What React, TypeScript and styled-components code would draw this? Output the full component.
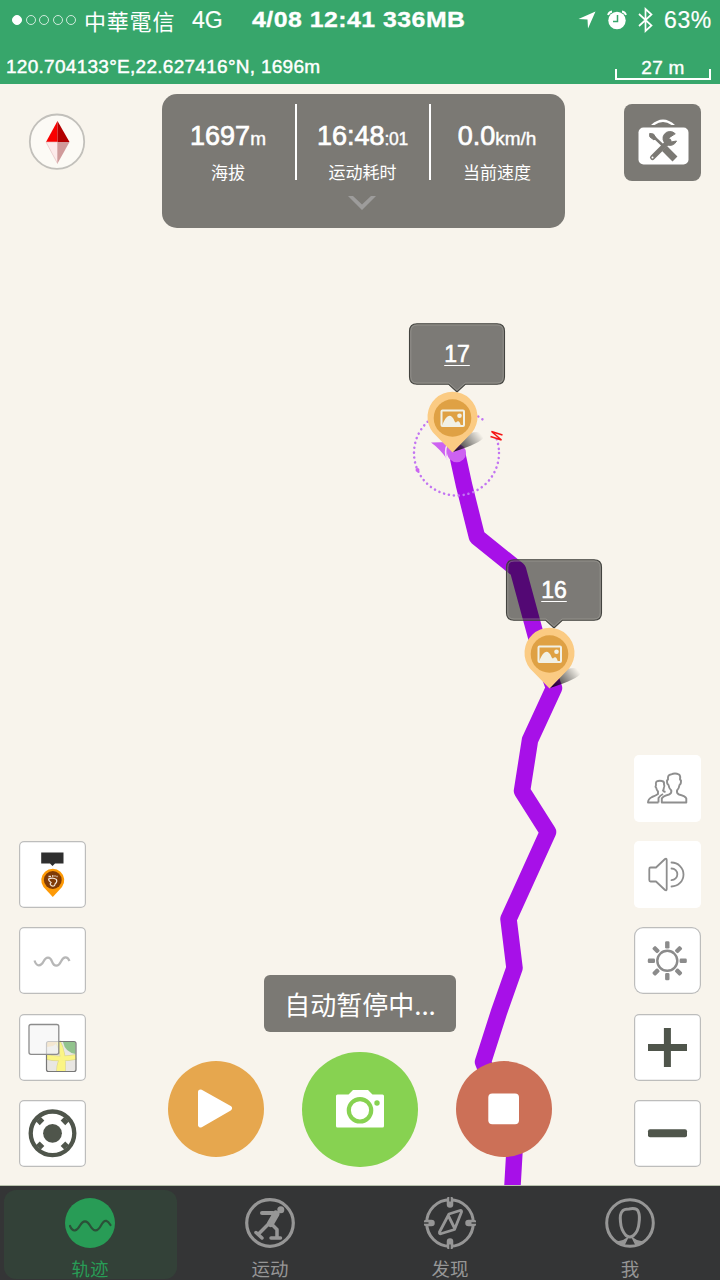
import React from "react";
import styled, { createGlobalStyle } from "styled-components";

const GlobalStyle = createGlobalStyle`
  * { box-sizing: border-box; }
  body {
    margin: 0;
    background: #f8f4ec;
    font-family: "Liberation Sans", "Noto Sans CJK SC", sans-serif;
  }
  button { border: 0; padding: 0; font: inherit; }
  svg { display: block; }
`;

const Screen = styled.div`
  width: 720px;
  height: 1280px;
  display: grid;
  grid-template-rows: 84px 1102px 94px;
  overflow: hidden;
`;

/* ---------- header ---------- */

const Header = styled.header`
  background: #37a66b;
  color: #fff;
  display: grid;
  grid-template-rows: 40px 44px;
`;

const StatusRow = styled.div`
  display: flex;
  align-items: center;
  padding: 0 8px 0 12px;
`;

const SignalDots = styled.div`
  display: flex;
  gap: 3.5px;
  width: 72px;
`;

const SignalDot = styled.i<{ $on?: boolean }>`
  width: 10px;
  height: 10px;
  border-radius: 50%;
  border: 1px solid ${(p) => (p.$on ? "#fff" : "rgba(255,255,255,.75)")};
  background: ${(p) => (p.$on ? "#fff" : "transparent")};
`;

const Carrier = styled.span`
  font: 22px/40px "Noto Sans CJK TC", sans-serif;
  letter-spacing: 0.8px;
  width: 108px;
`;

const Network = styled.span`
  font-size: 23px;
  line-height: 40px;
  width: 60px;
  -webkit-text-stroke: 0.2px #fff;
`;

const Clock = styled.span`
  font-size: 22px;
  font-weight: 700;
  line-height: 40px;
  white-space: nowrap;
  transform: scaleX(1.13);
  transform-origin: left center;
  letter-spacing: 0.42px;
  -webkit-text-stroke: 0.3px #fff;
`;

const StatusIcons = styled.div`
  display: flex;
  align-items: center;
  gap: 11px;
  margin-left: auto;
`;

const Battery = styled.span`
  font-size: 23px;
  line-height: 40px;
  letter-spacing: 0.6px;
  width: 48px;
  -webkit-text-stroke: 0.2px #fff;
`;

const InfoRow = styled.div`
  display: flex;
  justify-content: space-between;
  padding: 0 9px 0 6px;
`;

const Coordinates = styled.span`
  font-size: 19px;
  line-height: 53px;
  letter-spacing: 0.28px;
  -webkit-text-stroke: 0.45px #fff;
`;

const ScaleBar = styled.div`
  width: 96px;
  height: 40px;
  display: flex;
  flex-direction: column;
  justify-content: flex-end;
  align-items: center;
  font-size: 19px;
  line-height: 19px;
  letter-spacing: 0.3px;
  -webkit-text-stroke: 0.4px #fff;
`;

const ScaleBracket = styled.div`
  width: 96px;
  height: 11px;
  margin-top: -8px;
  border: 2px solid #fff;
  border-top: 0;
`;

/* ---------- map ---------- */

const MapArea = styled.main`
  display: grid;
  overflow: hidden;
  background: #f8f4ec;
  > * { grid-area: 1 / 1; }
`;

const Marker = styled.div<{ $x: number; $y: number }>`
  position: absolute;
  left: ${(p) => p.$x}px;
  top: ${(p) => p.$y}px;
  width: 96px;
  height: 132px;
`;

const MarkerLayer = styled.div`
  position: relative;
`;

const MarkerArt = styled.svg`
  position: absolute;
  inset: 0;
  overflow: visible;
`;

const MarkerLabel = styled.span`
  position: relative;
  display: block;
  text-align: center;
  color: #fff;
  font-size: 23px;
  line-height: 62px;
  text-decoration: underline;
  text-decoration-thickness: 1px;
  text-underline-offset: 3px;
  -webkit-text-stroke: 0.6px #fff;
`;

const Overlay = styled.div`
  position: relative;
  display: flex;
  flex-direction: column;
  justify-content: space-between;
  padding: 10px 19px 19px 19px;
`;

const TopControls = styled.div`
  display: flex;
  justify-content: space-between;
  align-items: flex-start;
`;

const Compass = styled.div`
  margin: 19px 0 0 9px;
  width: 65px;
`;

const MetricsPanel = styled.section`
  width: 403px;
  height: 134px;
  padding-top: 10px;
  margin-left: 9px;
  border-radius: 15px;
  background: #7b7974;
  color: #fff;
`;

const MetricRow = styled.div`
  display: grid;
  grid-template-columns: 133px 2px 132px 2px 133px;
`;

const Divider = styled.i`
  height: 76px;
  background: #fff;
`;

const Metric = styled.div`
  text-align: center;
  white-space: nowrap;
  padding-top: 16px;
`;

const MetricValue = styled.div`
  font-size: 27px;
  line-height: 32px;
  -webkit-text-stroke: 0.7px #fff;
`;

const Unit = styled.span<{ $tight?: boolean }>`
  font-size: ${(p) => (p.$tight ? 17.5 : 19)}px;
  letter-spacing: ${(p) => (p.$tight ? -0.3 : 0)}px;
  -webkit-text-stroke: 0.4px #fff;
`;

const MetricLabel = styled.div`
  font: 17px/24px "Noto Sans CJK SC", sans-serif;
  margin-top: 5px;
`;

const Chevron = styled.svg`
  margin: 11px 0 0 186px;
`;

const ToolButton = styled.button`
  width: 77px;
  height: 77px;
  margin: 9.5px 0 0 0;
  border-radius: 8px;
  background: #7b7974;
`;

const BottomControls = styled.div`
  display: flex;
  justify-content: space-between;
  align-items: flex-end;
`;

const ButtonStack = styled.div`
  display: flex;
  flex-direction: column;
  gap: 19.3px;
`;

const MapButton = styled.button<{ $plain?: boolean; $round?: boolean }>`
  width: 67px;
  height: 67px;
  border-radius: ${(p) => (p.$round ? 9 : 5)}px;
  background: #fff;
  box-shadow: ${(p) => (p.$plain ? "none" : "inset 0 0 0 1.2px #bdbdbc")};
`;

const Recorder = styled.div`
  display: flex;
  flex-direction: column;
  align-items: center;
  width: 384px;
`;

const Toast = styled.div`
  width: 192px;
  height: 57px;
  border-radius: 6px;
  background: #7b7974;
  color: #fff;
  font: 26px/57px "Noto Sans CJK SC", sans-serif;
  text-align: center;
  white-space: nowrap;
`;

const RecorderButtons = styled.div`
  width: 100%;
  display: flex;
  align-items: center;
  justify-content: space-between;
  margin-top: 19.5px;
`;

const RoundButton = styled.button<{ $size: number; $color: string }>`
  width: ${(p) => p.$size}px;
  height: ${(p) => p.$size}px;
  border-radius: 50%;
  background: ${(p) => p.$color};
  display: grid;
  place-items: center;
`;

/* ---------- tab bar ---------- */

const TabBar = styled.nav`
  display: grid;
  grid-template-columns: repeat(4, 1fr);
  background: #343536;
  box-shadow: 0 -1px 0 #b9c2ae;
  position: relative;
`;

const Tab = styled.a<{ $active?: boolean }>`
  margin: 4px 3.5px;
  padding-top: 6.5px;
  border-radius: 12px;
  display: flex;
  flex-direction: column;
  align-items: center;
  color: ${(p) => (p.$active ? "#289c56" : "#969696")};
  background: ${(p) => (p.$active ? "#334138" : "transparent")};
`;

const TabLabel = styled.span`
  font: 18.5px/22px "Noto Sans CJK SC", sans-serif;
  margin-top: 8px;
`;

/* ---------- drawings ---------- */

const ROUTE =
  "457,369 464,401 477,453 518,486 537,556 554,604 530,656 522,707 548,748 508.500,835 514.500,884 499,928 483,978 515,1058 512,1110";

function RouteLayer() {
  return (
    <svg width="720" height="1102" viewBox="0 0 720 1102">
      <polyline points={ROUTE} fill="none" stroke="#a710e8" strokeWidth="16.5" strokeLinejoin="round" strokeLinecap="round" />
      <circle cx="456.500" cy="369" r="42.500" fill="none" stroke="#c274f2" strokeWidth="2.500" strokeLinecap="round" strokeDasharray="0.1 4.850" />
      <path d="M489 356 L484 337 L501 334 L508 350 Z" fill="#f8f4ec" />
      <circle cx="456.700" cy="369" r="9.300" fill="#cd62f1" />
      <path d="M431 358.500 L451 358 L446.500 374.500 Q440 365 431 358.500Z" fill="#cd62f1" />
      <path d="M447 376 Q444 367 447.500 360" fill="none" stroke="#f4e4f5" strokeWidth="1.500" />
      <circle cx="417.500" cy="386" r="2" fill="#cd62f1" />
      <path d="M490.500 353.500 L501.500 357 L491.500 348.500 L502.500 352" transform="rotate(0 496 352) translate(0 -1)" fill="none" stroke="#f51616" strokeWidth="1.600" strokeLinejoin="bevel" />
    </svg>
  );
}

function PhotoMarker({ x, y, label, shift }: { x: number; y: number; label: string; shift: number }) {
  const id = `shade${label}`;
  return (
    <Marker $x={x} $y={y}>
      <MarkerArt width="96" height="132" viewBox="0 0 96 132">
        <defs>
          <linearGradient id={id} x1="0" y1="0.800" x2="1" y2="0.300">
            <stop offset="0" stopColor="#000" stopOpacity="0.850" />
            <stop offset="1" stopColor="#000" stopOpacity="0" />
          </linearGradient>
        </defs>
        <path
          d="M8 .8 H88 Q95.500 .8 95.500 8.300 V53.700 Q95.500 61.200 88 61.200 H56.500 L48 69 L39.500 61.200 H8 Q.5 61.200 .5 53.700 V8.300 Q.5 .8 8 .8Z"
          fill="rgba(0,0,0,.5)" stroke="#43433f" strokeWidth="1.100"
        />
        <path
          d="M8 2 H88 Q94.200 2 94.200 8.300 V53.700 Q94.200 60 88 60 H56 L48 67.300 L40 60 H8 Q1.800 60 1.800 53.700 V8.300 Q1.800 2 8 2Z"
          fill="none" stroke="#a5a39c" strokeOpacity=".7" strokeWidth=".8"
        />
        <g transform={`translate(${shift} 0)`}>
          <path d="M44 129 L61 110 Q74 107 75 114 Q72 120 44 129Z" fill={`url(#${id})`} />
          <path d="M43.500 129.500 L24 109.500 A25 25 0 1 1 63 109.500Z" fill="#fbcb83" />
          <circle cx="43.500" cy="95" r="18.800" fill="#dfa144" />
          <rect x="32.500" y="87.500" width="22.500" height="15.500" rx="1" fill="none" stroke="#f1f1e6" strokeWidth="2" />
          <path d="M33 103 C35 96 40 90 43 94 C46 97 45 99 47 99.500 C49 97 51 98 52 103Z" fill="#f1f1e6" />
          <circle cx="50.500" cy="92.800" r="2.300" fill="#f1f1e6" />
        </g>
      </MarkerArt>
      <MarkerLabel>{label}</MarkerLabel>
    </Marker>
  );
}

const Icon = ({ children }: { children: React.ReactNode }) => (
  <svg width="67" height="67" viewBox="0 0 67 67" fill="none">{children}</svg>
);

const TabIcon = ({ children }: { children: React.ReactNode }) => (
  <svg width="52" height="52" viewBox="0 0 52 52" fill="none" stroke="currentColor" strokeLinecap="round" strokeLinejoin="round">{children}</svg>
);

const RAYS = [0, 45, 90, 135, 180, 225, 270, 315];
const DIAGONALS = [45, 135, 225, 315];
const QUARTERS = [0, 90, 180, 270];

function ToolboxIcon() {
  return (
    <svg width="77" height="77" viewBox="0 0 77 77">
      <path d="M27 21 Q39 10 51 21 L47.500 21 Q39 15 30.500 21Z" fill="#fff" />
      <rect x="14.500" y="23.500" width="50" height="37" rx="5" fill="#fff" />
      <g stroke="#7b7974" fill="#7b7974" strokeLinecap="round">
        <path d="M27 31 L31 34 L40 42.500" strokeWidth="2.600" fill="none" />
        <path d="M26 29.500 L29.500 30 L32 34 L30 36 L26 33Z" strokeWidth="1" />
        <path d="M43 47 L48.500 52.500" strokeWidth="7" strokeLinecap="square" />
        <path d="M28.500 53.500 L45 37" strokeWidth="5" />
        <path d="M51 29.500 A7 7 0 1 0 52.500 37 L47 38 L44.500 34.500Z" strokeWidth="1" />
      </g>
      <circle cx="28.500" cy="53.500" r="1" fill="#fff" />
    </svg>
  );
}

export default function App() {
  return (
    <>
      <GlobalStyle />
      <Screen>
        <Header>
          <StatusRow>
            <SignalDots>
              <SignalDot $on />
              <SignalDot />
              <SignalDot />
              <SignalDot />
              <SignalDot />
            </SignalDots>
            <Carrier>中華電信</Carrier>
            <Network>4G</Network>
            <Clock>4/08 12:41 336MB</Clock>
            <StatusIcons>
              <svg width="18" height="18" viewBox="0 0 18 18"><path d="M17.500 .5 L10 17.500 L9.500 8.500 L.5 8Z" fill="#fff" /></svg>
              <svg width="20" height="20" viewBox="0 0 20 20" fill="none" stroke="#fff">
                <circle cx="10" cy="10.500" r="8.700" fill="#fff" stroke="none" />
                <path d="M1 5 Q2 2 5 1.500 M15 1.500 Q18 2 19 5" strokeWidth="1.800" />
                <path d="M10.500 5 V11.500 H6" stroke="#37a66b" strokeWidth="1.500" />
              </svg>
              <svg width="15" height="26" viewBox="0 0 15 26" fill="none" stroke="#fff" strokeWidth="1.700"><path d="M1 7 L13.500 18.500 L7.500 24 V2 L13.500 7.500 L1 19" /></svg>
              <Battery>63%</Battery>
            </StatusIcons>
          </StatusRow>
          <InfoRow>
            <Coordinates>120.704133°E,22.627416°N, 1696m</Coordinates>
            <ScaleBar>
              27 m
              <ScaleBracket />
            </ScaleBar>
          </InfoRow>
        </Header>

        <MapArea>
          <RouteLayer />
          <MarkerLayer>
            <Marker16 />
            <PhotoMarker x={409} y={239} label="17" shift={0} />
          </MarkerLayer>
          <Overlay>
            <TopControls>
              <Compass>
                <svg width="58" height="58" viewBox="0 0 58 58">
                  <circle cx="29" cy="28.700" r="27.200" fill="#fcfaf5" stroke="#c2c0bb" strokeWidth="1.800" />
                  <path d="M29.500 8 V29 H18Z" fill="#f90000" />
                  <path d="M29.500 8 V29 H41.500Z" fill="#b30000" />
                  <path d="M29.500 50.500 V29 H18Z" fill="#fdeaea" stroke="#e2baba" strokeWidth=".6" />
                  <path d="M29.500 50.500 V29 H41.500Z" fill="#d09a9a" />
                </svg>
              </Compass>
              <MetricsPanel>
                <MetricRow>
                  <Metric>
                    <MetricValue>1697<Unit>m</Unit></MetricValue>
                    <MetricLabel>海拔</MetricLabel>
                  </Metric>
                  <Divider />
                  <Metric>
                    <MetricValue>16:48<Unit $tight>:01</Unit></MetricValue>
                    <MetricLabel>运动耗时</MetricLabel>
                  </Metric>
                  <Divider />
                  <Metric>
                    <MetricValue>0.0<Unit>km/h</Unit></MetricValue>
                    <MetricLabel>当前速度</MetricLabel>
                  </Metric>
                </MetricRow>
                <Chevron width="28" height="16" viewBox="0 0 28 16"><path d="M0 1 H5 L14 9.500 L23 1 H28 L14 15Z" fill="#9d9c9b" /></Chevron>
              </MetricsPanel>
              <ToolButton aria-label="tools"><ToolboxIcon /></ToolButton>
            </TopControls>

            <BottomControls>
              <ButtonStack>
                <MapButton aria-label="markers">
                  <Icon>
                    <path d="M22.200 11.500 H44.500 V22.500 H36 L33.500 25 L31 22.500 H22.200Z" fill="#2f2f2f" />
                    <path d="M33.800 56 L24.500 46 A11.500 11.500 0 1 1 43 46Z" fill="#fd9a07" />
                    <circle cx="33.800" cy="39" r="8.900" fill="#7f3a06" />
                    <path d="M29.500 38 Q34 36 37.500 38.500 Q38.500 41 36 43 Q36 45.500 33 45 Q30 43.500 32 41.500 Q29.500 40 29.500 38Z" stroke="#f3e6da" strokeWidth="1.200" />
                    <path d="M29.500 35.500 H32 M33 35 H34.500 M35.500 35 H36.500 M37.500 35.500 H38.500" stroke="#f3e6da" strokeWidth="1.600" />
                  </Icon>
                </MapButton>
                <MapButton aria-label="track">
                  <Icon><path d="M15.500 33.500 C17.500 40 22 39.500 24.500 34.500 S31 29 33 34.500 S39.500 40 42 34.500 S48.500 29 50.500 34" stroke="#b7b7b7" strokeWidth="2.200" /></Icon>
                </MapButton>
                <MapButton aria-label="layers">
                  <Icon>
                    <rect x="27.500" y="27.500" width="29.500" height="30" rx="2" fill="#e9e7e3" />
                    <path d="M28 28 H40 L34 32 L28 33Z" fill="#f3cf91" />
                    <path d="M44 28 H56.500 V40 Q46 38 44 28Z" fill="#92c38d" />
                    <path d="M27.500 43 Q40 46 57 43 M39 28 Q45 38 44 57.500 M44 45 Q40 48 40 57" stroke="#ddd790" strokeWidth="5.500" />
                    <path d="M27.500 43 Q40 46 57 43 M39 28 Q45 38 44 57.500 M44 45 Q40 48 40 57" stroke="#fbf584" strokeWidth="4.200" />
                    <rect x="27.500" y="27.500" width="29.500" height="30" rx="2" stroke="#777" strokeWidth="1.200" />
                    <rect x="10" y="10.500" width="29.800" height="29.800" rx="2" fill="#f5f5f5" fillOpacity=".65" stroke="#8c8c8c" strokeWidth="1.300" />
                  </Icon>
                </MapButton>
                <MapButton aria-label="locate">
                  <Icon>
                    <circle cx="33.500" cy="33.300" r="21.800" stroke="#4f554b" strokeWidth="4.300" />
                    <circle cx="33.500" cy="33.300" r="9.400" fill="#4f554b" />
                    {DIAGONALS.map((a) => (
                      <path key={a} d="M33.500 13.500 V18.500" stroke="#4f554b" strokeWidth="6.500" transform={`rotate(${a} 33.500 33.300)`} />
                    ))}
                  </Icon>
                </MapButton>
              </ButtonStack>

              <Recorder>
                <Toast>自动暂停中...</Toast>
                <RecorderButtons>
                  <RoundButton $size={96} $color="#e6a74e" aria-label="resume">
                    <svg width="96" height="96" viewBox="0 0 96 96"><path d="M32.500 31 L61.500 47.300 L32.500 64Z" fill="#fff" stroke="#fff" strokeWidth="5" strokeLinejoin="round" /></svg>
                  </RoundButton>
                  <RoundButton $size={115.400} $color="#87d251" aria-label="camera">
                    <svg width="50" height="40" viewBox="0 0 50 40">
                      <path d="M2.500 5.500 H13.500 L18 1 H33 L37.500 5.500 H47.500 Q49 5.500 49 7 V37 Q49 38.500 47.500 38.500 H2.500 Q1 38.500 1 37 V7 Q1 5.500 2.500 5.500Z" fill="#fff" />
                      <circle cx="25" cy="21.300" r="11.200" fill="#fff" stroke="#87d251" strokeWidth="4.200" />
                      <circle cx="42" cy="14" r="2.700" fill="#87d251" />
                    </svg>
                  </RoundButton>
                  <RoundButton $size={96} $color="#cc7057" aria-label="stop">
                    <svg width="96" height="96" viewBox="0 0 96 96"><rect x="32.300" y="32.500" width="30.700" height="30.700" rx="4" fill="#fff" /></svg>
                  </RoundButton>
                </RecorderButtons>
              </Recorder>

              <ButtonStack>
                <MapButton $plain aria-label="friends">
                  <Icon>
                    <g stroke="#8e8e8e" strokeWidth="1.900" strokeLinejoin="round">
                      <path d="M27.800 47.500 V43.500 Q29 41 35 39.500 Q37.800 38.500 37.300 35.500 Q34.800 33 34.500 30 Q32.800 29 33 25.500 L34 24.500 Q33.500 19.500 37 19.500 Q41 17.500 45 19.500 Q46.800 21 46 24.500 L47 25.500 Q47.200 29 45.500 30 Q45.200 33 43 35.500 Q42.500 38.500 45 39.500 Q51.500 41 52.300 43.500 V47.500Z" />
                      <path d="M31.500 37 Q29.500 36.500 29 35.500 Q29.800 34.500 29.800 33 Q31 31.500 30 29.500 Q30.500 26.500 28 26 Q25 25.200 22.500 26.500 Q21.500 28 22 30 Q21 31.500 22.300 33 Q22.500 35 24 36.500 V39 Q22 40.500 18 42 Q14 44 14 47.500 H24.500 M24.500 47.500 V43 Q26 40.500 29 39" />
                    </g>
                  </Icon>
                </MapButton>
                <MapButton $plain aria-label="sound">
                  <Icon>
                    <g stroke="#8e8e8e" strokeWidth="1.800" strokeLinejoin="round" strokeLinecap="round">
                      <path d="M16.500 26.500 H22 L31 18 Q32.700 17 32.700 19 V48 Q32.700 50 31 49 L22 40.500 H16.500 Q15.300 40.500 15.300 39 V28 Q15.300 26.500 16.500 26.500Z" />
                      <path d="M37.500 27.500 A5.800 5.800 0 0 1 37.500 39.200 M37.500 21.500 A12 12 0 0 1 37.500 45.500" />
                    </g>
                  </Icon>
                </MapButton>
                <MapButton $round aria-label="brightness">
                  <Icon>
                    <circle cx="33.300" cy="33.800" r="10" stroke="#8b8b8b" strokeWidth="2.400" />
                    {RAYS.map((a) => (
                      <rect key={a} x="31.100" y="14.300" width="4.400" height="7.200" rx="1.300" fill="#8b8b8b" transform={`rotate(${a} 33.300 33.800)`} />
                    ))}
                  </Icon>
                </MapButton>
                <MapButton aria-label="zoom in">
                  <Icon><path d="M17.500 33.500 H49.500 M33.400 17.500 V49.500" stroke="#4f554b" strokeWidth="7" strokeLinecap="square" strokeLinejoin="round" /></Icon>
                </MapButton>
                <MapButton aria-label="zoom out">
                  <Icon><rect x="14" y="29.300" width="39" height="8" rx="2" fill="#4f554b" /></Icon>
                </MapButton>
              </ButtonStack>
            </BottomControls>
          </Overlay>
        </MapArea>

        <TabBar>
          <Tab $active>
            <TabIcon>
              <circle cx="26" cy="26" r="25" fill="currentColor" stroke="none" />
              <path d="M6 29 C9 36 13 34 16 28.500 S23 23 26 28.500 S33 36 37 28.500 S44 24 46.500 28" stroke="#2b5138" strokeWidth="2.200" />
            </TabIcon>
            <TabLabel>轨迹</TabLabel>
          </Tab>
          <Tab>
            <TabIcon>
              <circle cx="26" cy="26" r="23.300" strokeWidth="3.200" />
              <circle cx="36.800" cy="12.800" r="3.500" fill="currentColor" stroke="none" />
              <path d="M18 16 H29" strokeWidth="4" />
              <path d="M32 17 L26.500 26.500" strokeWidth="7" />
              <path d="M24.500 27 L14.500 37 M12 35.500 L18 41" strokeWidth="3.500" />
              <path d="M27.500 27 L33 32.500 V40 M27 41 H36.500" strokeWidth="3.500" />
            </TabIcon>
            <TabLabel>运动</TabLabel>
          </Tab>
          <Tab>
            <TabIcon>
              <circle cx="26" cy="26" r="23.300" strokeWidth="3" />
              {QUARTERS.map((a) => (
                <g key={a} transform={`rotate(${a} 26 26)`}>
                  <path d="M26 2.500 V7.500" strokeWidth="6.500" />
                  <path d="M26 0 V4.500" strokeWidth="1.400" stroke="#343536" strokeLinecap="butt" />
                </g>
              ))}
              <path d="M36 13.500 L25 17 L15.500 35 Q15 37.500 17.500 36.500 L30.500 32.500 L37.500 15 Q38 13 36 13.500Z M24.500 19 L30.500 31" strokeWidth="2.800" />
            </TabIcon>
            <TabLabel>发现</TabLabel>
          </Tab>
          <Tab>
            <TabIcon>
              <circle cx="26" cy="26" r="23.300" strokeWidth="3" />
              <path d="M22 38.500 Q17 33 16.500 25 Q15.500 17 18.500 14 Q20 12 25 12 Q33 10.500 34.500 15 Q36 19 35 26 Q34.500 34 29.500 38.500 Q26 41.500 22 38.500Z" strokeWidth="3" />
              <path d="M13 44.500 Q18 45.500 23.500 41 L20 48Z M39 44.500 Q34 45.500 28.500 41 L32 48Z" fill="currentColor" strokeWidth="1.500" />
            </TabIcon>
            <TabLabel>我</TabLabel>
          </Tab>
        </TabBar>
      </Screen>
    </>
  );
}

function Marker16() {
  return <PhotoMarker x={506} y={475} label="16" shift={0} />;
}
